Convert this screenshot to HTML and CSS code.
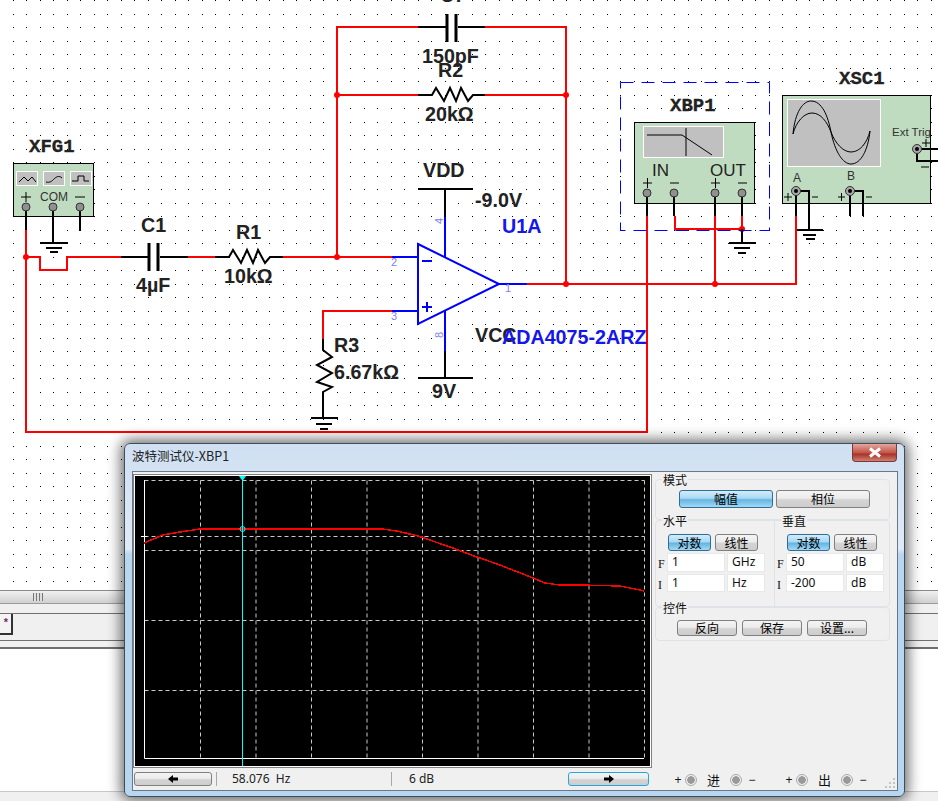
FILE: index.html
```html
<!DOCTYPE html>
<html lang="zh">
<head>
<meta charset="utf-8">
<title>Multisim</title>
<link rel="stylesheet" href="styles.css">
</head>
<body>
<div class="app">
  <svg class="canvas" width="938" height="590" viewBox="0 0 938 590">
    <defs>
      <pattern id="dots" width="27" height="27" patternUnits="userSpaceOnUse">
        <rect class="dot" x="13" y="0" width="1" height="1"/>
        <rect class="dot" x="26" y="0" width="1" height="1"/>
        <rect class="dot" x="13" y="14" width="1" height="1"/>
        <rect class="dot" x="26" y="14" width="1" height="1"/>
      </pattern>
    </defs>
    <rect class="sheet" width="938" height="590"/>
    <rect class="sheet-dots" width="938" height="590" fill="url(#dots)"/>

    <!-- red nets -->
    <path class="wire" d="M26 230V432H647V216"/>
    <path class="wire" d="M26 257H40V270H67V257H121"/>
    <path class="wire" d="M188 257H215M283 257H392"/>
    <path class="wire" d="M337 257V27H418M485 27H566V284"/>
    <path class="wire" d="M337 95H418M485 95H566"/>
    <path class="wire" d="M527 284H796V216"/>
    <path class="wire" d="M715 216V284M675 216V229H742V216"/>
    <path class="wire" d="M392 311H323V339"/>
    <circle class="node" cx="26" cy="257" r="3"/>
    <circle class="node" cx="337" cy="95" r="3"/>
    <circle class="node" cx="566" cy="95" r="3"/>
    <circle class="node" cx="337" cy="257" r="3"/>
    <circle class="node" cx="566" cy="284" r="3"/>
    <circle class="node" cx="715" cy="284" r="3"/>
    <circle class="node" cx="742" cy="229" r="3"/>

    <!-- passive parts -->
    <path class="part" d="M418 27H447M458 27H485M121 257H148M160 257H188"/>
    <path class="plate" d="M447 14V42M456 14V42M149 243V271M158 243V271"/>
    <path class="part" d="M215 257H229L233 250L241 263L247 250L253 263L258 250L265 263L270 257H283"/>
    <path class="part" d="M418 95H432L436 88L444 101L450 88L456 101L461 88L468 101L473 95H485"/>
    <path class="part" d="M323 339V350L332 357L317 365L332 373L317 382L332 387L323 392V418"/>
    <path class="part" d="M311 418H338M316 424H332M320 429H328"/>

    <!-- op amp -->
    <path class="amp" d="M418 244L499 284L418 324Z"/>
    <path class="amp" d="M392 257H418M392 311H418M499 284H527M445 217V258M445 310V351"/>
    <path class="amp" d="M422 261H432M422 307H432M427 302V312"/>
    <path class="part" d="M445 189V217M445 351V378M418 189H473M418 378H473"/>
    <text class="pin-no" x="391" y="266">2</text>
    <text class="pin-no" x="391" y="320">3</text>
    <text class="pin-no" x="505" y="292">1</text>
    <text class="pin-no" transform="translate(443 224) rotate(-90)">4</text>
    <text class="pin-no" transform="translate(443 338) rotate(-90)">8</text>

    <!-- function generator -->
    <rect class="inst" x="13.5" y="163.5" width="80" height="53"/>
    <rect class="screen" x="16.5" y="171.5" width="21" height="14"/>
    <rect class="screen" x="43.5" y="171.5" width="21" height="14"/>
    <rect class="screen" x="70.5" y="171.5" width="21" height="14"/>
    <path class="trace" d="M19 182L24 177L28 181L32 177L36 182"/>
    <path class="trace" d="M46 182C50 183 52 181 54 179C56 177 59 175 62 178"/>
    <path class="trace" d="M72 181H78V176H84V181H89"/>
    <path class="trace" d="M21 197H31M26 192V202M75 197H85"/>
    <text class="inst-small" x="40" y="201">COM</text>
    <path class="part" d="M26 207V230M53 207V243M80 207V231M40 243H68M46 248H62M50 252H58"/>
    <circle class="pin" cx="26" cy="207" r="4"/>
    <circle class="pin" cx="53" cy="207" r="4"/>
    <circle class="pin" cx="80" cy="207" r="4"/>

    <!-- bode plotter -->
    <rect class="frame" x="620.5" y="82.5" width="149" height="148"/>
    <rect class="inst" x="634.5" y="122.5" width="120" height="81"/>
    <rect class="screen" x="643.5" y="126.5" width="80" height="31"/>
    <path class="trace" d="M647 135H682L712 155M686 128V156"/>
    <text class="inst-big" x="652" y="176">IN</text>
    <text class="inst-big" x="710" y="176">OUT</text>
    <path class="trace" d="M643 183H652M647.500 178V188M670 183H679M711 183H720M715.500 178V188M738 183H747"/>
    <path class="part" d="M647 193V216M674 193V216M715 193V216M742 193V216M742 229V243M729 243H756M734 248H750M738 253H746"/>
    <circle class="pin" cx="647" cy="193" r="4"/>
    <circle class="pin" cx="674" cy="193" r="4"/>
    <circle class="pin" cx="715" cy="193" r="4"/>
    <circle class="pin" cx="742" cy="193" r="4"/>

    <!-- oscilloscope -->
    <rect class="inst" x="782.500" y="95.500" width="148" height="108"/>
    <rect class="screen" x="787.500" y="99.500" width="93" height="67"/>
    <path class="trace" d="M793 134C795 112 803 101 811 101C822 101 828 116 831 132C835 152 843 164 851 164C861 164 868 150 870 131"/>
    <path class="trace" d="M793 134C796 122 804 113 812 113C821 113 827 122 831 132C835 143 843 152 851 152C860 152 867 143 870 131"/>
    <text class="inst-small inst-trig" x="892" y="136">Ext Trig</text>
    <text class="inst-small" x="793" y="182">A</text>
    <text class="inst-small" x="847" y="180">B</text>
    <path class="trace" d="M922 143H930M926 139V147M921 167H929M784 197H792M788 193V201M812 197H818M838 197H845M841.500 193V201M866 197H872"/>
    <path class="part" d="M917 149H938M917 149V161H938M796 191V216M796 191H809V230M850 191V216M850 191H863V216M797 230H823M803 235H816M806 239H815"/>
    <circle class="pin-big" cx="917" cy="149" r="4.500"/>
    <circle class="pin-big" cx="796" cy="191" r="4.500"/>
    <circle class="pin-big" cx="850" cy="191" r="4.500"/>
    <circle class="pin-dot" cx="917" cy="149" r="2"/>
    <circle class="pin-dot" cx="796" cy="191" r="2"/>
    <circle class="pin-dot" cx="850" cy="191" r="2"/>

    <!-- labels -->
    <text class="ref" x="29" y="152">XFG1</text>
    <text class="ref" x="670" y="111">XBP1</text>
    <text class="ref" x="839" y="84">XSC1</text>
    <text class="lbl" x="440" y="2">C7</text>
    <text class="lbl" x="422" y="63">150pF</text>
    <text class="lbl" x="438" y="77">R2</text>
    <text class="lbl" x="425" y="121">20kΩ</text>
    <text class="lbl" x="141" y="232">C1</text>
    <text class="lbl" x="136" y="292">4µF</text>
    <text class="lbl" x="236" y="239">R1</text>
    <text class="lbl" x="224" y="283">10kΩ</text>
    <text class="lbl" x="423" y="177">VDD</text>
    <text class="lbl" x="475" y="207">-9.0V</text>
    <text class="lbl" x="475" y="342">VCC</text>
    <text class="lbl" x="334" y="352">R3</text>
    <text class="lbl" x="334" y="379">6.67kΩ</text>
    <text class="lbl" x="432" y="398">9V</text>
    <text class="lbl lbl-blue" x="502" y="233">U1A</text>
    <text class="lbl lbl-blue" x="502" y="344">ADA4075-2ARZ</text>
  </svg>

  <div class="splitbar"><span class="grip"></span></div>
  <div class="strip"></div>
  <div class="tabrow"><div class="tab">*</div></div>
  <div class="strip strip-low"></div>
  <div class="output"></div>
  <div class="foot"></div>

  <section class="dialog">
    <header class="titlebar">波特测试仪-XBP1</header>
    <div class="close">
      <svg width="16" height="11" viewBox="0 0 16 11"><path class="close-x" d="M3 1.500L13 9.500M13 1.500L3 9.500"/></svg>
    </div>
    <div class="client">
      <div class="left">
        <svg class="plot" width="515" height="290" viewBox="0 0 515 290">
          <path class="grid" d="M65 4V282M120.500 4V282M176 4V282M231.500 4V282M287 4V282M342.500 4V282M398 4V282M453.500 4V282M509 4V282M9 4H509M9 60H509M9 74H509M9 144H509M9 214H509"/>
          <path class="axis" d="M9.500 4V282.500H509M6 60.500H12"/>
          <path class="bode" d="M9 67L28 59L45 56L65 53L247 53L262 55L283 60L315 71L342 81L365 89L398 102L410 107L425 109L445 109L485 110L505 114L509 115"/>
          <path class="cursor" d="M107.500 0V290"/>
          <path class="cursor-head" d="M104 0H111L107.500 5Z"/>
          <circle class="cursor-mark" cx="107.500" cy="53" r="2.500"/>
        </svg>
        <div class="status">
          <button class="btn btn-nav"><svg width="10" height="8" viewBox="0 0 10 8"><path class="arrow" d="M0 4L5 0V2.500H10V5.500H5V8Z"/></svg></button>
          <div class="cell">58.076&nbsp; Hz</div>
          <div class="cell">6 dB</div>
          <button class="btn btn-nav btn-focus"><svg width="10" height="8" viewBox="0 0 10 8"><path class="arrow" d="M10 4L5 0V2.500H0V5.500H5V8Z"/></svg></button>
        </div>
      </div>
      <div class="right">
        <div class="group group-mode">
          <div class="legend">模式</div>
          <div class="row-mode">
            <button class="btn btn-wide btn-on">幅值</button>
            <button class="btn btn-wide">相位</button>
          </div>
        </div>
        <div class="group group-axes">
          <div class="axis-col">
            <div class="legend">水平</div>
            <div class="toggles">
              <button class="btn btn-tog btn-on">对数</button>
              <button class="btn btn-tog">线性</button>
            </div>
            <div class="field"><span class="fl">F</span><span class="val">1</span><span class="unit">GHz</span></div>
            <div class="field"><span class="fl">I</span><span class="val">1</span><span class="unit">Hz</span></div>
          </div>
          <div class="axis-col axis-col-r">
            <div class="legend">垂直</div>
            <div class="toggles">
              <button class="btn btn-tog btn-on">对数</button>
              <button class="btn btn-tog">线性</button>
            </div>
            <div class="field"><span class="fl">F</span><span class="val">50</span><span class="unit">dB</span></div>
            <div class="field"><span class="fl">I</span><span class="val">-200</span><span class="unit">dB</span></div>
          </div>
        </div>
        <div class="group group-ctrl">
          <div class="legend">控件</div>
          <div class="row-ctrl">
            <button class="btn btn-ctrl">反向</button>
            <button class="btn btn-ctrl">保存</button>
            <button class="btn btn-ctrl">设置...</button>
          </div>
        </div>
        <div class="terms">
          <div class="term-set">
            <span class="sign sign-plus">+</span><span class="term"></span><span class="term-name">进</span><span class="term"></span><span class="sign sign-minus">−</span>
          </div>
          <div class="term-set">
            <span class="sign sign-plus">+</span><span class="term"></span><span class="term-name">出</span><span class="term"></span><span class="sign sign-minus">−</span>
          </div>
        </div>
        <svg class="resize" width="11" height="11" viewBox="0 0 11 11"><path class="resize-dots" d="M8 0h2v2h-2zM4 4h2v2h-2zM8 4h2v2h-2zM0 8h2v2h-2zM4 8h2v2h-2zM8 8h2v2h-2z"/></svg>
      </div>
    </div>
  </section>
</div>
</body>
</html>
```

FILE: styles.css
```css
* { box-sizing: border-box; }
html, body { margin: 0; padding: 0; background: #fff; }
.app {
  position: relative;
  width: 938px;
  height: 801px;
  overflow: hidden;
  display: flex;
  flex-direction: column;
  font-family: "Noto Sans", "Noto Sans CJK SC", sans-serif;
}

/* schematic */
.canvas { display: block; flex: none; }
.sheet { fill: #fff; }
.dot { fill: #000; }
.wire { fill: none; stroke: #f00; stroke-width: 2; }
.node { fill: #f00; }
.part { fill: none; stroke: #000; stroke-width: 2; }
.plate { fill: none; stroke: #000; stroke-width: 3; }
.amp { fill: none; stroke: #00f; stroke-width: 2; }
.pin-no { font: 11px "Liberation Sans", sans-serif; fill: #8080f0; }
.inst { fill: #c0dcc0; stroke: #000; stroke-width: 1; }
.screen { fill: #c0c0c0; stroke: #fff; stroke-width: 1; }
.trace { fill: none; stroke: #000; stroke-width: 1; }
.pin { fill: #909090; stroke: #333; stroke-width: 1; }
.pin-big { fill: #a8a8a8; stroke: #333; stroke-width: 1; }
.pin-dot { fill: #000; }
.frame { fill: none; stroke: #00f; stroke-width: 1; stroke-dasharray: 13 8; }
.inst-small { font: 12px "Liberation Sans", sans-serif; fill: #333; }
.inst-trig { font-size: 11.500px; }
.inst-big { font: 17px "Liberation Sans", sans-serif; fill: #222; }
.ref { font: bold 19px "Liberation Mono", monospace; fill: #222; stroke: #222; stroke-width: .3; }
.lbl { font: bold 19.700px "Liberation Sans", sans-serif; fill: #222; }
.lbl-blue { fill: #1515ee; }

/* workspace chrome */
.splitbar {
  flex: none;
  height: 14px;
  display: flex;
  padding-left: 33px;
  align-items: center;
  border-top: 1px solid #8a8a8a;
  border-bottom: 1px solid #9a9a9a;
  background: linear-gradient(#f0f0f0, #d0d0d0);
}
.grip {
  width: 10px;
  height: 8px;
  background: repeating-linear-gradient(90deg, #777 0 1px, #ddd 1px 3px);
}
.strip { flex: none; height: 9px; background: #f0f0f0; }
.strip-low { height: 8px; border-bottom: 2px solid #6e6e6e; }
.tabrow {
  flex: none;
  height: 28px;
  background: #f0f0f0;
  border-top: 1px solid #707070;
  border-bottom: 1px solid #707070;
}
.tab {
  width: 13px;
  height: 21px;
  background: #f4f4f4;
  border-right: 2px solid #333;
  border-bottom: 2px solid #333;
  font: bold 11px/16px "Liberation Sans", sans-serif;
  text-align: right;
  padding-right: 3px;
  color: #703060;
}
.output { flex: 1; background: #fff; }
.foot { flex: none; height: 10px; background: #f0f0f0; border-top: 1px solid #c8c8c8; }

/* dialog */
.dialog {
  position: absolute;
  left: 124px;
  top: 443px;
  width: 781px;
  height: 354px;
  border: 1px solid #3d4d5c;
  border-radius: 6px;
  background: linear-gradient(#cfe0f2 0, #dfeaf6 105px, #b9d6f0 110px);
  box-shadow: 0 0 14px 3px rgba(0, 0, 0, .6);
  display: flex;
  flex-direction: column;
  font-size: 12px;
  color: #111;
}
.titlebar {
  flex: none;
  height: 27px;
  padding: 4px 0 0 7px;
  font: 12.500px/16px "Noto Sans CJK SC", sans-serif;
  color: #222;
}
.close {
  position: absolute;
  top: 0;
  right: 7px;
  width: 45px;
  height: 18px;
  display: flex;
  align-items: center;
  justify-content: center;
  border: 1px solid #7a3a34;
  border-top: 0;
  border-radius: 0 0 4px 4px;
  background: linear-gradient(#e2a79e, #c4574a 50%, #a8332a 60%, #d08070);
}
.close-x { fill: none; stroke: #fff; stroke-width: 3; }
.client {
  flex: none;
  height: 320px;
  margin: 0 6px 0 7px;
  border: 1px solid #66788a;
  background: #f0f0f0;
  display: flex;
}
.left { flex: none; width: 518px; padding: 4px 0 0 2px; }
.plot {
  display: block;
  background: #000;
  box-shadow: 0 0 0 1px #fff, 0 0 0 2px #808080;
}
.grid { fill: none; stroke: #c8c8c8; stroke-width: 1; stroke-dasharray: 4 3; transform: translate(0.500px, 0.500px); }
.axis { fill: none; stroke: #fff; stroke-width: 1; }
.bode { fill: none; stroke: #f00; stroke-width: 1.500; shape-rendering: crispEdges; }
.cursor { fill: none; stroke: #0ff; stroke-width: 1; }
.cursor-head { fill: #0ff; }
.cursor-mark { fill: none; stroke: #0ff; stroke-width: 1; }
.status { display: flex; align-items: stretch; height: 14px; margin-top: 6px; margin-left: -1px; }
.cell {
  flex: none;
  width: 175px;
  border-left: 1px solid #a8a8a8;
  background: #f0f0f0;
  padding-left: 17px;
  font: 12px/14px "Noto Sans", sans-serif;
  color: #222;
}
.cell:nth-child(2) { margin-left: 4px; padding-left: 15px; }
.btn {
  border: 1px solid #808080;
  border-radius: 3px;
  background: linear-gradient(#f4f4f4 0, #ececec 45%, #d4d4d4 55%, #cdcdcd 100%);
  font: 12px/1 "Noto Sans CJK SC", sans-serif;
  color: #000;
  padding: 0;
  display: flex;
  align-items: center;
  justify-content: center;
}
.btn-nav { width: 78px; }
.btn-nav.btn-focus { width: 81px; border-color: #25a7de; border-width: 1.500px; margin-left: 2px; }
.arrow { fill: #000; }
.btn-on {
  border-color: #2c6e96;
  background: linear-gradient(#d3ecfa 0, #a9d9f3 45%, #64b5e3 55%, #a6d8f2 100%);
}
.right { position: relative; flex: 1; padding: 7px 0 0 4px; display: flex; flex-direction: column; }
.group { width: 235px; border: 1px solid #dfe3e8; border-radius: 4px; }
.legend {
  width: fit-content;
  margin: -8px 0 0 6px;
  padding: 0 1px;
  height: 16px;
  background: #f0f0f0;
  font: 12px/16px "Noto Sans CJK SC", sans-serif;
}
.group-mode { height: 41px; }
.row-mode { display: flex; gap: 3px; margin: 2px 0 0 23px; }
.btn-wide { width: 94px; height: 18px; }
.group-axes { height: 87px; display: flex; }
.axis-col { flex: none; width: 118px; }
.axis-col-r { flex: 1; border-left: 1px solid #dfe3e8; }
.toggles { display: flex; gap: 4px; margin: 5px 0 2px 12px; }
.btn-tog { width: 43px; height: 17px; }
.field { display: flex; height: 19px; margin-bottom: 2px; }
.field + .field { height: 18px; }
.fl { flex: none; width: 11px; padding-left: 2px; font: 12px/22px "Liberation Serif", serif; }
.val, .unit {
  flex: none;
  background: #fff;
  border: 1px solid #e8e8e8;
  font: 12px/15px "Noto Sans", sans-serif;
}
.val { width: 58px; padding-left: 4px; margin-right: 2px; }
.unit { width: 38px; padding-left: 4px; }
.group-ctrl { height: 34px; }
.row-ctrl { display: flex; gap: 5px; margin: 4px 0 0 21px; }
.btn-ctrl { width: 60px; height: 16px; }
.terms { display: flex; gap: 18px; margin: 131px 0 0 18.500px; }
.term-set { display: flex; align-items: center; height: 15px; width: 93px; }
.sign { flex: none; width: 9px; font: 12px/1 "Liberation Sans", sans-serif; text-align: center; }
.sign-plus { margin-right: 1.500px; }
.sign-minus { margin-left: 4.500px; }
.term {
  flex: none;
  width: 12px;
  height: 12px;
  margin: 0 1px;
  border: 1px solid #aaa;
  border-radius: 50%;
  background: radial-gradient(circle, #999 0 3.500px, #f0f0f0 4px);
}
.term-name { flex: none; width: 31px; text-align: center; font: 13px/1 "Noto Sans CJK SC", sans-serif; }
.resize { position: absolute; right: 1px; bottom: 1px; }
.resize-dots { fill: #c4c4c4; }
```
